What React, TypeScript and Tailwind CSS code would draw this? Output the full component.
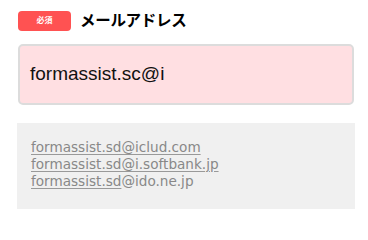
export default function App() {
  const suggestions = [
    { user: 'formassist.sd', domain: '@iclud.com', full: true },
    { user: 'formassist.sd', domain: '@i.softbank.jp', full: true },
    { user: 'formassist.sd', domain: '@ido.ne.jp', full: false },
  ];

  return (
    <div className="w-[368px] h-[222px] bg-white pl-[18px] pr-[14px] pt-[10px] font-['Liberation_Sans','Noto_Sans_CJK_JP',sans-serif]">
      {/* Label */}
      <div className="flex items-center gap-[9px] h-[21px]">
        <span className="flex items-center justify-center w-[53px] h-[20px] rounded-[4px] bg-[#ff5252] text-white text-[8px] font-bold">
          必須
        </span>
        <span className="text-[15.5px] font-bold text-black leading-none tracking-[-0.3px]">メールアドレス</span>
      </div>

      {/* Input */}
      <div className="mt-[13px] h-[61px] w-[336px] flex items-center px-[10px] rounded-[5px] border-2 border-[#dcdcdc] bg-[#ffdfe2]">
        <span className="text-[19px] text-[#111]">formassist.sc@i</span>
      </div>

      {/* Suggestions */}
      <div className="mt-[18px] -ml-px w-[338px] bg-[#f0f0f0] pl-[14px] pt-4 pb-[19px] font-['DejaVu_Sans',sans-serif] text-[13.6px] leading-[17px] text-[#888]">
        {suggestions.map((s, i) => (
          <div key={i}>
            {s.full ? (
              <span className="underline decoration-[#999] underline-offset-2">{s.user + s.domain}</span>
            ) : (
              <>
                <span className="underline decoration-[#999] underline-offset-2">{s.user}</span>
                <span>{s.domain}</span>
              </>
            )}
          </div>
        ))}
      </div>
    </div>
  );
}
